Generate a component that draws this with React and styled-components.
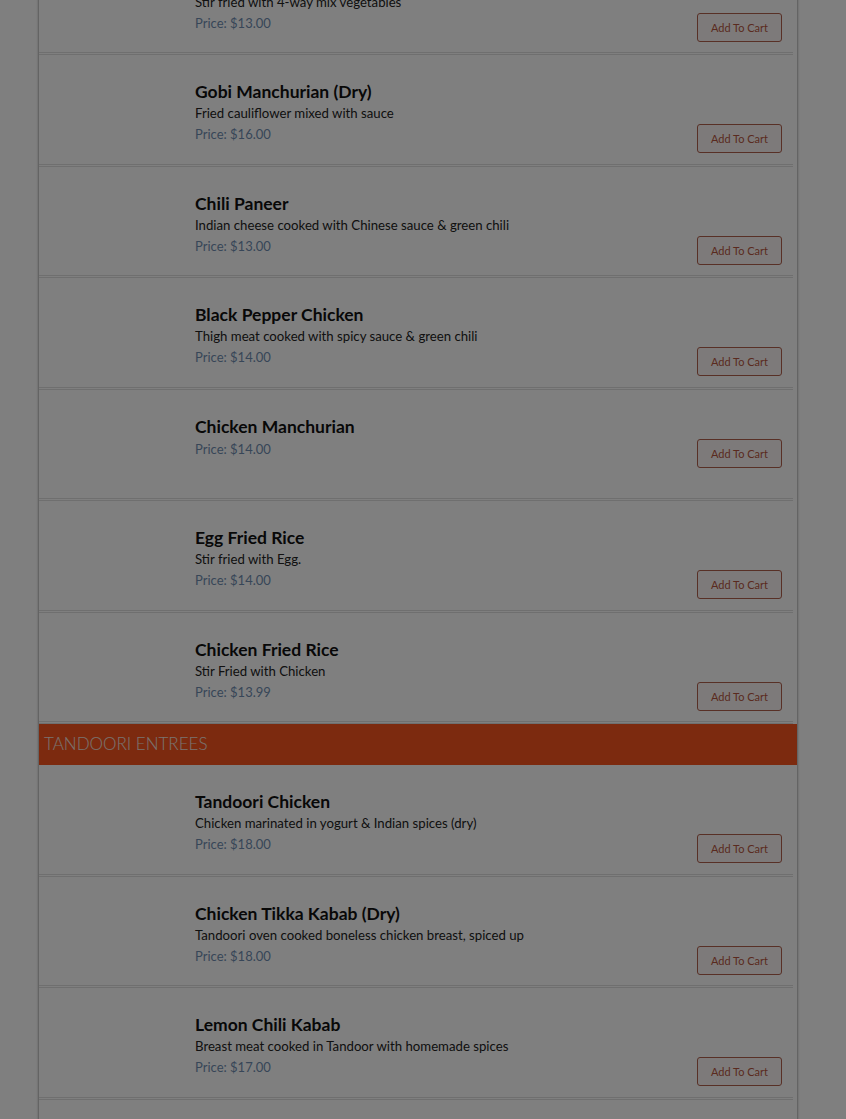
import React from "react";
import styled, { createGlobalStyle } from "styled-components";

const GlobalStyle = createGlobalStyle`
  html, body {
    margin: 0;
    padding: 0;
    background: #ffffff;
    font-family: Lato, "Liberation Sans", sans-serif;
    overflow: hidden;
  }
`;

const Backdrop = styled.div`
  position: fixed;
  inset: 0;
  background: rgba(0, 0, 0, 0.5);
`;

const MenuBox = styled.div`
  width: 758px;
  margin-left: 38px;
  margin-top: -56.5px;
  border-left: 1px solid #c8c8c8;
  border-right: 1px solid #c8c8c8;
  box-shadow: 0 0 2px rgba(0, 0, 0, 0.25);
  background: #ffffff;
`;

const SectionHeader = styled.div`
  height: 41px;
  display: flex;
  align-items: center;
  padding-left: 5px;
  background: #f8541f;
  color: #f4e6e0;
  font-weight: 300;
  font-size: 17px;
  line-height: 1;
  padding-bottom: 2px;
  box-sizing: border-box;
  text-transform: uppercase;
`;

const ItemRow = styled.div`
  height: 108.5px;
  display: flex;
  align-items: flex-start;
  margin-right: 4px;
  border-bottom: 3px double #dedede;
  box-sizing: content-box;
`;

const ImageSlot = styled.div`
  width: 156px;
  flex-shrink: 0;
`;

const ItemBody = styled.div`
  flex: 1;
  display: flex;
  align-items: flex-end;
  padding-top: 26px;
  padding-right: 11px;
`;

const ItemText = styled.div`
  flex: 1;
  padding-bottom: 8px;
`;

const ItemName = styled.div`
  font-size: 17.5px;
  font-weight: 700;
  line-height: 22px;
  color: #111111;
`;

const ItemDescr = styled.div`
  font-size: 13.2px;
  line-height: 20px;
  color: #222222;
`;

const ItemPrice = styled.div`
  font-size: 13px;
  line-height: 22px;
  color: #6f8db0;
`;

const CartButton = styled.button`
  width: 85px;
  height: 29px;
  padding: 0;
  border: 1px solid #b0604c;
  border-radius: 3px;
  background: #fbf5f4;
  color: #b5553f;
  font-family: inherit;
  font-size: 11px;
  cursor: pointer;
`;

const sections = [
  {
    title: null,
    items: [
      { name: "Veg Hakka Noodles", descr: "Stir fried with 4-way mix vegetables", price: "13.00" },
      { name: "Gobi Manchurian (Dry)", descr: "Fried cauliflower mixed with sauce", price: "16.00" },
      { name: "Chili Paneer", descr: "Indian cheese cooked with Chinese sauce & green chili", price: "13.00" },
      { name: "Black Pepper Chicken", descr: "Thigh meat cooked with spicy sauce & green chili", price: "14.00" },
      { name: "Chicken Manchurian", descr: "", price: "14.00" },
      { name: "Egg Fried Rice", descr: "Stir fried with Egg.", price: "14.00" },
      { name: "Chicken Fried Rice", descr: "Stir Fried with Chicken", price: "13.99" },
    ],
  },
  {
    title: "Tandoori Entrees",
    items: [
      { name: "Tandoori Chicken", descr: "Chicken marinated in yogurt & Indian spices (dry)", price: "18.00" },
      { name: "Chicken Tikka Kabab (Dry)", descr: "Tandoori oven cooked boneless chicken breast, spiced up", price: "18.00" },
      { name: "Lemon Chili Kabab", descr: "Breast meat cooked in Tandoor with homemade spices", price: "17.00" },
      { name: "Malai Kabab", descr: "Chicken breast marinated in cream & cheese", price: "17.00" },
    ],
  },
];

const MenuItem = ({ item }) => (
  <ItemRow>
    <ImageSlot />
    <ItemBody>
      <ItemText>
        <ItemName>{item.name}</ItemName>
        {item.descr && <ItemDescr>{item.descr}</ItemDescr>}
        <ItemPrice>Price: ${item.price}</ItemPrice>
      </ItemText>
      <CartButton>Add To Cart</CartButton>
    </ItemBody>
  </ItemRow>
);

const App = () => {
  return (
    <>
      <GlobalStyle />
      <MenuBox>
        {sections.map((section, i) => (
          <React.Fragment key={i}>
            {section.title && <SectionHeader>{section.title}</SectionHeader>}
            {section.items.map((item) => (
              <MenuItem key={item.name} item={item} />
            ))}
          </React.Fragment>
        ))}
      </MenuBox>
      <Backdrop />
    </>
  );
};

export default App;
